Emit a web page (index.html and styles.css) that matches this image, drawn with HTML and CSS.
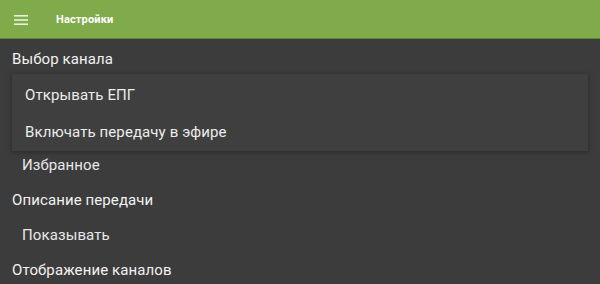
FILE: index.html
```html
<!DOCTYPE html>
<html lang="ru">
<head>
    <meta charset="UTF-8">
    <meta name="viewport" content="width=device-width, initial-scale=1.0">
    <title>Настройки</title>
    <link rel="stylesheet" href="styles.css">
</head>
<body>
    <header class="toolbar">
        <svg class="menu-icon" width="16" height="12" viewBox="0 0 16 12">
            <rect x="1" y="1" width="14" height="1.6" fill="#e8f0de"/>
            <rect x="1" y="5.2" width="14" height="1.6" fill="#e8f0de"/>
            <rect x="1" y="9.4" width="14" height="1.6" fill="#e8f0de"/>
        </svg>
        <h1 class="title">Настройки</h1>
    </header>
    <main class="prefs">
        <div class="category">Выбор канала</div>
        <div class="popup">
            <div class="popup-item">Открывать ЕПГ</div>
            <div class="popup-item">Включать передачу в эфире</div>
        </div>
        <div class="item item-after-popup">Избранное</div>
        <div class="category">Описание передачи</div>
        <div class="item">Показывать</div>
        <div class="category">Отображение каналов</div>
    </main>
</body>
</html>
```

FILE: styles.css
```css
* {
    margin: 0;
    padding: 0;
    box-sizing: border-box;
}

body {
    background-color: #3c3c3c;
    color: #f0f0f0;
    font-family: Roboto, 'Noto Sans', sans-serif;
    overflow: hidden;
}

/* Toolbar */
.toolbar {
    height: 39px;
    background-color: #7fab4a;
    border-bottom: 1px solid #5f8736;
    display: flex;
    align-items: center;
    padding-left: 13px;
}

.menu-icon {
    display: block;
    margin-top: 1px;
}

.title {
    font-size: 11px;
    font-weight: 700;
    color: #ffffff;
    margin-left: 27px;
    letter-spacing: 0.15px;
}

/* Preference list */
.prefs {
    padding-top: 3px;
}

.category,
.item {
    height: 35px;
    line-height: 35px;
    font-size: 15px;
    letter-spacing: 0.1px;
    white-space: nowrap;
}

.category {
    padding-left: 12px;
    color: #f2f2f2;
}

.item {
    padding-left: 22px;
    color: #e8e8e8;
}

.item-after-popup {
    margin-top: -3px;
}

/* Dropdown popup over the list */
.popup {
    position: relative;
    margin: -3px 12px 0 12px;
    padding-top: 3px;
    background-color: #3f3f3f;
    box-shadow: 0 1px 5px rgba(0, 0, 0, 0.35);
    z-index: 1;
}

.popup-item {
    height: 37px;
    line-height: 37px;
    padding-left: 13px;
    font-size: 15px;
    letter-spacing: 0.1px;
    color: #ececec;
    white-space: nowrap;
}
```
